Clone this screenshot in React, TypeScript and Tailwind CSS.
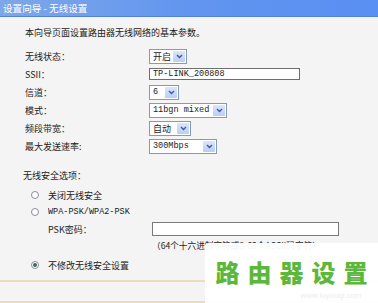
import React from "react";

const cjk = { fontFamily: '"Noto Sans CJK SC", "Liberation Sans", sans-serif' };
const mono = { fontFamily: '"Liberation Mono", "Noto Sans CJK SC", monospace' };

// small text is drawn at 12px and scaled down, so a browser minimum font size can't enlarge it
const Small = ({ children, className = "", style = cjk }: { children: React.ReactNode; className?: string; style?: React.CSSProperties }) => (
  <span className={`inline-block origin-left whitespace-nowrap text-[12px] leading-[14px] text-[#222] ${className}`} style={style}>
    {children}
  </span>
);

const Chevron = () => (
  <svg width="7" height="5" viewBox="0 0 7 5">
    <polyline points="1,1 3.5,3.5 6,1" fill="none" stroke="#3d5a99" strokeWidth="1.4" />
  </svg>
);

const Select = ({ value, width, cjkText = false }: { value: string; width: string; cjkText?: boolean }) => (
  <div className={`flex h-[15px] items-stretch overflow-hidden border border-[#7f9db9] bg-white ${width}`}>
    <span className="flex flex-1 items-center overflow-hidden pl-[3px]">
      {cjkText ? (
        <Small className="scale-[0.75] text-[#111]">{value}</Small>
      ) : (
        <Small className="scale-[0.71] text-[#111]" style={mono}>
          {value}
        </Small>
      )}
    </span>
    <span className="m-[1px] flex w-[12px] shrink-0 items-center justify-center rounded-[1px] bg-gradient-to-b from-[#dbe6fd] to-[#b9cdf8]">
      <Chevron />
    </span>
  </div>
);

const Row = ({ label, children }: { label: string; children: React.ReactNode }) => (
  <div className="flex h-[18px] items-center">
    <span className="flex w-[124px] shrink-0 items-center">
      <Small className="scale-[0.75]">{label}</Small>
    </span>
    {children}
  </div>
);

const Radio = ({ checked = false }: { checked?: boolean }) => (
  <span className="flex h-[8px] w-[8px] shrink-0 items-center justify-center rounded-full border border-[#8a8f98] bg-white">
    {checked ? <span className="h-[4px] w-[4px] rounded-full bg-[#3f6b5a]" /> : null}
  </span>
);

export default function App() {
  return (
    <div className="relative flex h-[303px] w-[378px] flex-col overflow-hidden bg-white" style={cjk}>
      <div className="flex h-[17px] shrink-0 items-center border-b border-[#4f80dc] bg-gradient-to-r from-[#7ea7e8] via-[#6195ef] to-[#5a8ff3] pl-[3px] pr-[2px]">
        <Small className="scale-[0.8] text-white">设置向导 - 无线设置</Small>
      </div>

      <div className="flex flex-1">
        <div className="w-[4px] bg-[#eadfc4]" />
        <div className="flex flex-1 flex-col bg-[#f4f4f4]">
          <div className="flex flex-1 flex-col pl-[25px]">
            <div className="mt-[9px] flex h-[12px] items-center">
              <Small className="scale-[0.75]">本向导页面设置路由器无线网络的基本参数。</Small>
            </div>

            <div className="mt-[9px] flex flex-col">
              <Row label="无线状态：">
                <Select value="开启" width="w-[38px]" cjkText />
              </Row>
              <Row label="SSII：">
                <div className="flex h-[12px] w-[151px] items-center overflow-hidden border border-[#6e6e6e] bg-white pl-[3px]">
                  <Small className="scale-[0.71] text-[#111]" style={mono}>
                    TP-LINK_200808
                  </Small>
                </div>
              </Row>
              <Row label="信道：">
                <Select value="6" width="w-[30px]" />
              </Row>
              <Row label="模式：">
                <Select value="11bgn mixed" width="w-[78px]" />
              </Row>
              <Row label="频段带宽：">
                <Select value="自动" width="w-[42px]" cjkText />
              </Row>
              <Row label="最大发送速率:">
                <Select value="300Mbps" width="w-[68px]" />
              </Row>
            </div>

            <div className="ml-[-2px] mt-[11px] flex h-[18px] items-center">
              <Small className="scale-[0.75]">无线安全选项：</Small>
            </div>
            <div className="mt-[2px] flex h-[18px] items-center pl-[6px]">
              <Radio />
              <span className="ml-[9px] flex items-center">
                <Small className="scale-[0.75]">关闭无线安全</Small>
              </span>
            </div>
            <div className="flex h-[16px] items-center pl-[6px]">
              <Radio />
              <span className="ml-[9px] flex items-center">
                <Small className="scale-[0.71]" style={mono}>
                  WPA-PSK/WPA2-PSK
                </Small>
              </span>
            </div>
            <div className="flex h-[18px] items-center">
              <span className="ml-[23px] flex w-[104px] shrink-0 items-center">
                <Small className="scale-[0.75]">PSK密码：</Small>
              </span>
              <div className="h-[14px] w-[187px] border border-[#7a7a7a] bg-white" />
            </div>
            <div className="flex h-[14px] items-center pl-[127px]">
              <Small className="scale-[0.72]">（64个十六进制字符或8-63个ASCII码字符）</Small>
            </div>
            <div className="mt-[4px] flex h-[18px] items-center pl-[6px]">
              <Radio checked />
              <span className="ml-[9px] flex items-center">
                <Small className="scale-[0.75]">不修改无线安全设置</Small>
              </span>
            </div>
          </div>
          <div className="mb-[19px] h-[2px] bg-[#eadcbc]" />
        </div>
        <div className="w-[3px] bg-[#efe4cc]" />
        <div className="w-[3px] bg-white" />
      </div>
      <div className="h-[2px] shrink-0 bg-[#eadcbc]" />

      <div className="absolute left-[205px] top-[243px] flex h-[62px] w-[173px] flex-col items-center rounded-tl-[4px] bg-white/95">
        <span className="mt-[16px] pl-[8px] text-[24px] font-black leading-[26px] tracking-[8px] text-[#5cb83a]" style={cjk}>
          路由器设置
        </span>
        <span className="mt-[4px] self-end pr-[16px] text-[12px] leading-[12px] text-[#ededed]" style={{ fontFamily: '"Liberation Sans", sans-serif' }}>
          <span className="inline-block origin-right scale-[0.66]">www.luyouqi.com</span>
        </span>
      </div>
    </div>
  );
}
